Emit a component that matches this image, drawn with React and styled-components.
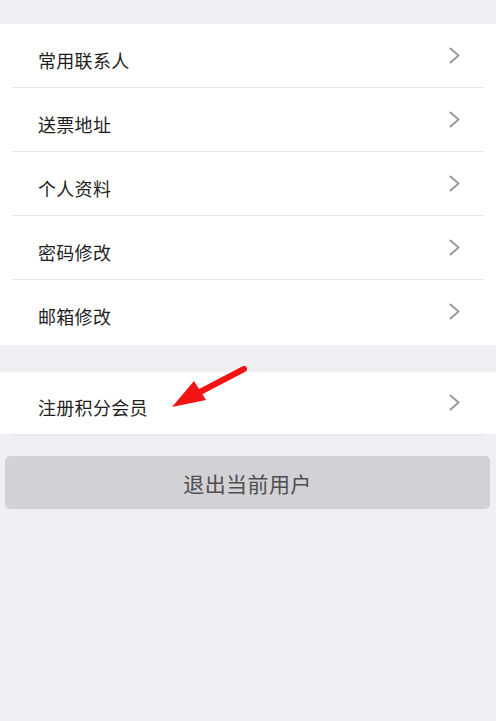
import React from 'react'
import styled, { createGlobalStyle } from 'styled-components'

const GlobalStyle = createGlobalStyle`
  html, body {
    margin: 0;
    padding: 0;
    background: #efeff4;
  }
  body {
    font-family: "Noto Sans CJK SC", "Noto Sans", sans-serif;
  }
`

const Page = styled.div`
  position: relative;
  width: 496px;
  min-height: 721px;
  padding-top: 24px;
  box-sizing: border-box;
  background: #efeff4;
`

const Section = styled.div`
  background: #ffffff;
  margin-bottom: ${({ gap }) => gap || 0}px;
`

const Row = styled.div`
  position: relative;
  display: flex;
  align-items: center;
  justify-content: space-between;
  height: ${({ h }) => h || 64}px;
  padding: 0 36px 0 38px;
  box-sizing: border-box;

  &::after {
    content: '';
    display: ${({ last }) => (last ? 'none' : 'block')};
    position: absolute;
    left: 12px;
    right: 12px;
    bottom: 0;
    height: 1px;
    background: #e6e6ea;
  }
`

const Label = styled.span`
  font-size: 18px;
  color: #1e1e1e;
  letter-spacing: 0.3px;
  padding-top: 7px;
`

const Chevron = styled.svg`
  width: 11px;
  height: 17px;
  margin-top: -2px;
`

const BottomLine = styled.div`
  height: 2px;
  margin: 0 12px;
  background: #e8e8ec;
`

const LogoutButton = styled.button`
  display: block;
  width: 485px;
  height: 53px;
  margin: 20px 0 0 5px;
  border: none;
  border-radius: 5px;
  background: #d1d1d6;
  color: #4f4f4f;
  font-family: "Noto Sans CJK SC", "Noto Sans", sans-serif;
  font-size: 21px;
  letter-spacing: 0.4px;
  padding: 0;
`

const Arrow = styled.svg`
  position: absolute;
  left: 160px;
  top: 360px;
  width: 100px;
  height: 60px;
  pointer-events: none;
`

function Arrowhead() {
  return (
    <Chevron viewBox="0 0 11 17">
      <path d="M1.5 1.5 L9.5 8.5 L1.5 15.5" fill="none" stroke="#9b9b9b" strokeWidth="2" strokeLinecap="round" strokeLinejoin="round" />
    </Chevron>
  )
}

const mainItems = ['常用联系人', '送票地址', '个人资料', '密码修改', '邮箱修改']

export default function App() {
  return (
    <>
      <GlobalStyle />
      <Page>
        <Section gap={27}>
          {mainItems.map((item, i) => (
            <Row key={item} h={i === mainItems.length - 1 ? 65 : 64} last={i === mainItems.length - 1}>
              <Label>{item}</Label>
              <Arrowhead />
            </Row>
          ))}
        </Section>
        <Section>
          <Row h={62} last>
            <Label>注册积分会员</Label>
            <Arrowhead />
          </Row>
        </Section>
        <BottomLine />
        <LogoutButton>退出当前用户</LogoutButton>
        <Arrow viewBox="0 0 100 60">
          <line x1="84" y1="9" x2="38" y2="33" stroke="#f21414" strokeWidth="6" strokeLinecap="round" />
          <polygon points="12,47 34,21 46,40" fill="#f21414" />
        </Arrow>
      </Page>
    </>
  )
}
